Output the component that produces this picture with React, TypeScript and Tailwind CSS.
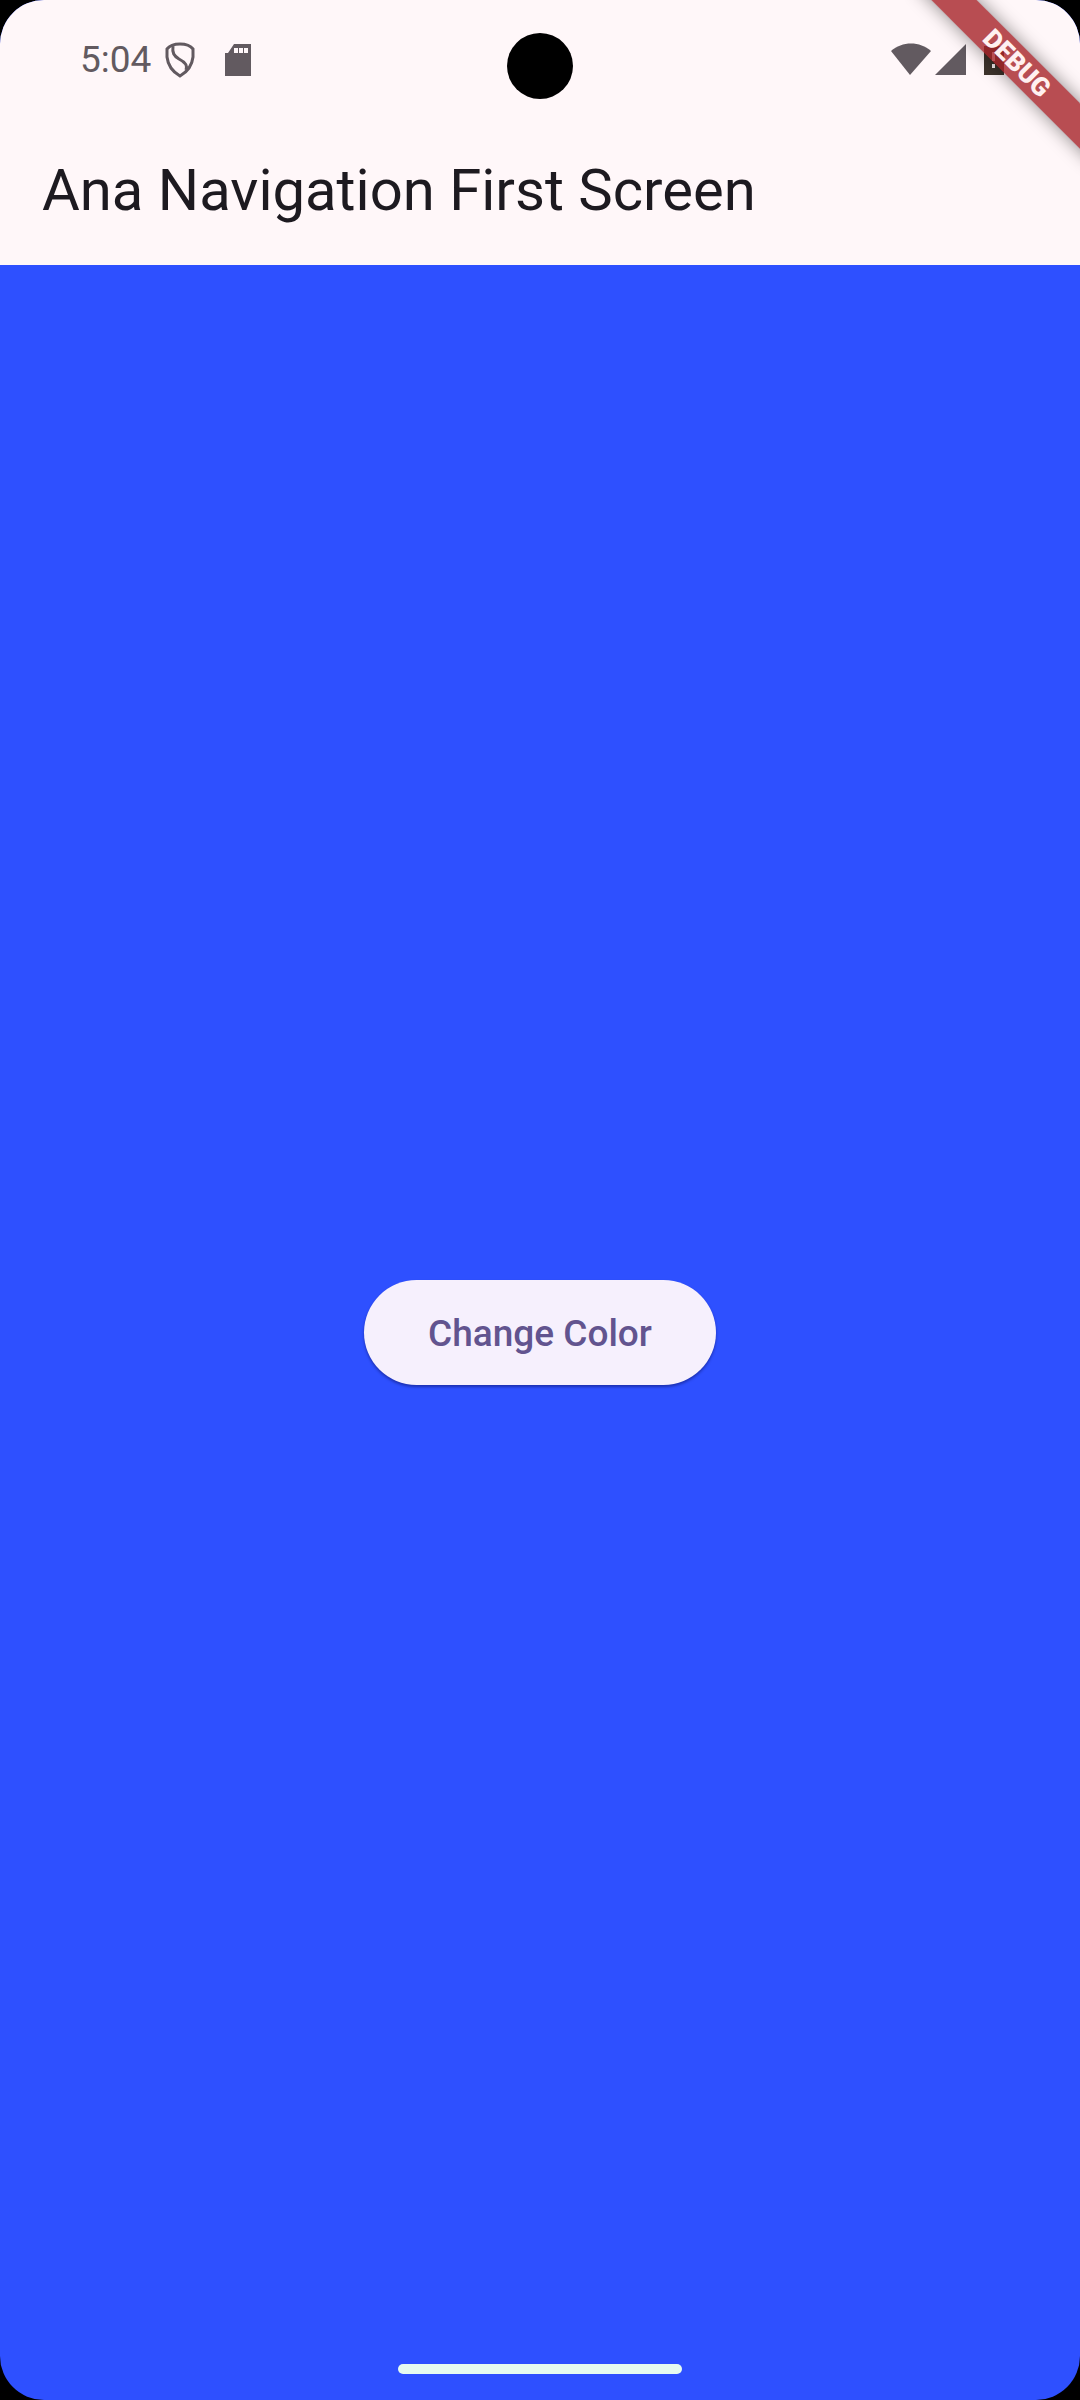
import React, { useState } from "react";

const colors = ["bg-[#2e50ff]", "bg-[#f44336]", "bg-[#4caf50]"];

function StatusBar() {
  return (
    <div className="relative flex h-[118px] items-center justify-between pr-[76px] pl-20 text-[#625a60]">
      <div className="flex items-center pt-[2px]">
        <time className="text-[37px] leading-[42px]">5:04</time>
        <svg className="ml-[14px] h-9 w-[30px]" viewBox="0 0 30 36" fill="none" stroke="currentColor" strokeWidth="3">
          <path d="M15 2C10 2 5 3 2 7V15C3 24 8 30 15 34C22 30 27 24 28 15V7C25 3 20 2 15 2Z" />
          <path d="M8 4C7 11 9 14 14 17C20 20 23 23 21 28" />
        </svg>
        <svg className="ml-[30px] h-8 w-[26px]" viewBox="0 0 26 32" fill="currentColor">
          <path fillRule="evenodd" d="M9 0H26V32H0V9H3ZM9 4V9H13V4ZM14 4V9H18V4ZM19 4V9H23V4Z" />
        </svg>
      </div>
      <div className="flex items-center">
        <svg className="h-8 w-10" viewBox="0 0 40 32" fill="currentColor">
          <path d="M0 8C11-2 29-2 40 8L19 32Z" />
        </svg>
        <svg className="ml-1 h-[31px] w-[31px]" viewBox="0 0 31 31" fill="currentColor">
          <path d="M31 0V31H0Z" />
        </svg>
        <svg className="ml-[18px] h-8 w-5" viewBox="0 0 20 32" fill="#3d342c">
          <path fillRule="evenodd" d="M0 3H6V0H14V3H20V32H0ZM8 9V18H11V9ZM8 21V25H11V21Z" />
        </svg>
      </div>
      <span className="absolute top-[33px] left-1/2 size-[66px] -translate-x-1/2 rounded-full bg-black" />
    </div>
  );
}

export default function App() {
  const [index, setIndex] = useState(0);
  return (
    <div className="min-h-screen bg-black font-[Roboto,sans-serif]">
      <div className={`relative flex min-h-screen flex-col overflow-hidden rounded-[44px] ${colors[index]}`}>
        <header className="bg-[#fff7f9]">
          <StatusBar />
          <div className="flex h-[147px] items-center px-[42px] pb-1">
            <h1 className="text-[58px] leading-[72px] text-[#1d1a20]">Ana Navigation First Screen</h1>
          </div>
        </header>
        <main className="flex grow items-center justify-center">
          <button
            type="button"
            onClick={() => setIndex((index + 1) % colors.length)}
            className="h-[105px] rounded-full bg-[#f6f0fd] px-16 pt-[2px] text-[37px] font-medium text-[#62548f] shadow-[0_2px_3px_rgba(0,0,60,0.4)]"
          >
            Change Color
          </button>
        </main>
        <div className="absolute bottom-[26px] left-1/2 h-[10px] w-[284px] -translate-x-1/2 rounded-full bg-[#e6fbf0]" />
        <div className="absolute top-[47px] -right-[62px] flex h-8 w-[250px] rotate-45 items-center justify-center bg-[#a62228]/80 text-[26px] font-black text-[#fff0f0] shadow-[0_0_18px_rgba(0,0,0,0.45)]">
          DEBUG
        </div>
      </div>
    </div>
  );
}
